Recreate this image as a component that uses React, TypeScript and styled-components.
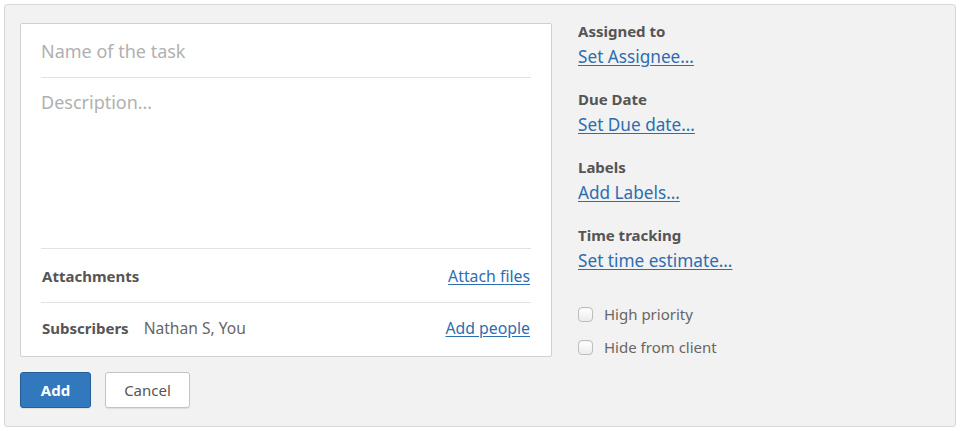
import React from 'react';
import styled, { createGlobalStyle } from 'styled-components';

const GlobalStyle = createGlobalStyle`
  html, body {
    margin: 0;
    padding: 0;
    background: #ffffff;
  }
  body {
    font-family: 'Noto Sans', 'Open Sans', Arial, sans-serif;
    -webkit-font-smoothing: antialiased;
  }
  * {
    box-sizing: border-box;
  }
`;

const sidebarFields = [
  { label: 'Assigned to', action: 'Set Assignee…' },
  { label: 'Due Date', action: 'Set Due date…' },
  { label: 'Labels', action: 'Add Labels…' },
  { label: 'Time tracking', action: 'Set time estimate…' },
];

const flags = ['High priority', 'Hide from client'];

const App: React.FC = () => {
  return (
    <StyledPage>
      <GlobalStyle />
      <StyledPanel>
        <StyledMain>
          <StyledCard>
            <StyledNameInput placeholder="Name of the task" />
            <StyledDescription placeholder="Description…" />
            <StyledRow>
              <StyledRowTitle>Attachments</StyledRowTitle>
              <StyledRowLink href="#">Attach files</StyledRowLink>
            </StyledRow>
            <StyledRow last>
              <StyledRowTitle>Subscribers</StyledRowTitle>
              <StyledRowValue>Nathan S, You</StyledRowValue>
              <StyledRowLink href="#">Add people</StyledRowLink>
            </StyledRow>
          </StyledCard>
          <StyledActions>
            <StyledButton primary>Add</StyledButton>
            <StyledButton>Cancel</StyledButton>
          </StyledActions>
        </StyledMain>

        <StyledSidebar>
          {sidebarFields.map(field => (
            <StyledField key={field.label}>
              <StyledFieldLabel>{field.label}</StyledFieldLabel>
              <StyledFieldLink href="#">{field.action}</StyledFieldLink>
            </StyledField>
          ))}
          <StyledFlags>
            {flags.map(flag => (
              <StyledFlag key={flag}>
                <StyledCheckbox type="checkbox" />
                {flag}
              </StyledFlag>
            ))}
          </StyledFlags>
        </StyledSidebar>
      </StyledPanel>
    </StyledPage>
  );
};

const StyledPage = styled.div`
  padding: 4px;
  width: 960px;
`;

const StyledPanel = styled.div`
  display: flex;
  align-items: flex-start;
  gap: 26px;
  height: 423px;
  padding: 18px 15px;
  background-color: #f2f2f2;
  border: 1px solid #d9d9d9;
  border-radius: 3px;
`;

const StyledMain = styled.div`
  display: flex;
  flex-direction: column;
  width: 532px;
  flex-shrink: 0;
`;

const StyledCard = styled.div`
  display: flex;
  flex-direction: column;
  height: 334px;
  padding: 0 20px;
  background-color: #ffffff;
  border: 1px solid #d0d0d0;
  border-radius: 2px;
`;

const StyledNameInput = styled.input`
  height: 54px;
  padding: 0;
  border: none;
  border-bottom: 1px solid #e2e2e2;
  outline: none;
  font-family: inherit;
  font-size: 18px;
  color: #444;
  background: transparent;

  &::placeholder {
    color: #b0b0b0;
  }
`;

const StyledDescription = styled.textarea`
  height: 171px;
  padding: 12px 0 0;
  border: none;
  border-bottom: 1px solid #e2e2e2;
  outline: none;
  resize: none;
  font-family: inherit;
  font-size: 18px;
  line-height: 24px;
  color: #444;
  background: transparent;

  &::placeholder {
    color: #b0b0b0;
  }
`;

const StyledRow = styled.div<{ last?: boolean }>`
  display: flex;
  align-items: center;
  gap: 15px;
  height: ${p => (p.last ? '53px' : '54px')};
  padding: ${p => (p.last ? '0 1px 3px' : '0 1px')};
  border-bottom: ${p => (p.last ? 'none' : '1px solid #e2e2e2')};
`;

const StyledRowTitle = styled.span`
  font-size: 15px;
  font-weight: 700;
  color: #555;
`;

const StyledRowValue = styled.span`
  font-size: 15.6px;
  color: #666;
`;

const StyledRowLink = styled.a`
  margin-left: auto;
  font-size: 15.8px;
  color: #2d6db0;
  text-decoration: underline;
  text-underline-offset: 2px;
`;

const StyledActions = styled.div`
  display: flex;
  gap: 14px;
  margin-top: 15px;
`;

const StyledButton = styled.button<{ primary?: boolean }>`
  height: 36px;
  padding: 0 ${p => (p.primary ? '19px' : '17px')};
  min-width: ${p => (p.primary ? '71px' : '85px')};
  font-family: inherit;
  font-size: 15px;
  font-weight: ${p => (p.primary ? 700 : 400)};
  color: ${p => (p.primary ? '#ffffff' : '#555')};
  background-color: ${p => (p.primary ? '#3179bc' : '#ffffff')};
  border: 1px solid ${p => (p.primary ? '#245f99' : '#c4c4c4')};
  border-radius: 3px;
  box-shadow: 0 1px 1px rgba(0, 0, 0, 0.08);
  cursor: pointer;
`;

const StyledSidebar = styled.div`
  display: flex;
  flex-direction: column;
  margin-top: -2px;
`;

const StyledField = styled.div`
  display: flex;
  flex-direction: column;
  margin-bottom: 21px;
`;

const StyledFieldLabel = styled.span`
  height: 20px;
  line-height: 20px;
  font-size: 15px;
  font-weight: 700;
  color: #555;
`;

const StyledFieldLink = styled.a`
  margin-top: 5px;
  height: 22px;
  line-height: 22px;
  font-size: 17.2px;
  color: #2d6db0;
  text-decoration: underline;
  text-underline-offset: 2px;
`;

const StyledFlags = styled.div`
  display: flex;
  flex-direction: column;
  gap: 11px;
  margin-top: 10px;
`;

const StyledFlag = styled.label`
  display: flex;
  align-items: center;
  gap: 11px;
  height: 22px;
  font-size: 15px;
  color: #666;
`;

const StyledCheckbox = styled.input`
  appearance: none;
  width: 15px;
  height: 15px;
  margin: 0;
  border: 1px solid #bdbdbd;
  border-radius: 4px;
  background: linear-gradient(#ffffff, #ececec);
  box-shadow: inset 0 1px 1px rgba(0, 0, 0, 0.05);
`;

export default App;
